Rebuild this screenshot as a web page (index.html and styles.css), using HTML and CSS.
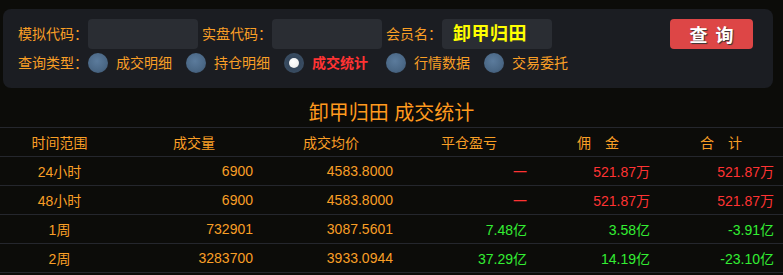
FILE: index.html
```html
<!DOCTYPE html>
<html lang="zh-CN">
<head>
    <meta charset="UTF-8">
    <title>成交统计</title>
    <link rel="stylesheet" href="styles.css">
</head>
<body>
    <div class="panel">
        <div class="row">
            <label class="label">模拟代码：</label>
            <input type="text" class="field">
            <label class="label">实盘代码：</label>
            <input type="text" class="field">
            <label class="label short">会员名：</label>
            <div class="field member">卸甲归田</div>
            <button class="btn-query">查 询</button>
        </div>
        <div class="row types">
            <span class="label">查询类型：</span>
            <label class="radio"><span class="dot"></span><span class="text">成交明细</span></label>
            <label class="radio"><span class="dot"></span><span class="text">持仓明细</span></label>
            <label class="radio active"><span class="dot"></span><span class="text">成交统计</span></label>
            <label class="radio"><span class="dot"></span><span class="text">行情数据</span></label>
            <label class="radio"><span class="dot"></span><span class="text">交易委托</span></label>
        </div>
    </div>

    <h2 class="title">卸甲归田 成交统计</h2>

    <table class="stats">
        <colgroup>
            <col style="width: 119px">
            <col style="width: 139px">
            <col style="width: 140px">
            <col style="width: 134px">
            <col style="width: 123px">
            <col style="width: 128px">
        </colgroup>
        <thead>
            <tr>
                <th class="range">时间范围</th>
                <th class="wide">成交量</th>
                <th>成交均价</th>
                <th class="narrow">平仓盈亏</th>
                <th>佣　金</th>
                <th>合　计</th>
            </tr>
        </thead>
        <tbody>
            <tr>
                <td class="range">24小时</td>
                <td>6900</td>
                <td>4583.8000</td>
                <td class="red">一</td>
                <td class="red">521.87万</td>
                <td class="red">521.87万</td>
            </tr>
            <tr>
                <td class="range">48小时</td>
                <td>6900</td>
                <td>4583.8000</td>
                <td class="red">一</td>
                <td class="red">521.87万</td>
                <td class="red">521.87万</td>
            </tr>
            <tr>
                <td class="range">1周</td>
                <td>732901</td>
                <td>3087.5601</td>
                <td class="green">7.48亿</td>
                <td class="green">3.58亿</td>
                <td class="green">-3.91亿</td>
            </tr>
            <tr>
                <td class="range">2周</td>
                <td>3283700</td>
                <td>3933.0944</td>
                <td class="green">37.29亿</td>
                <td class="green">14.19亿</td>
                <td class="green">-23.10亿</td>
            </tr>
        </tbody>
    </table>
</body>
</html>
```

FILE: styles.css
```css
body {
    margin: 0;
    background-color: #0c0c09;
    color: #f99f26;
    font-family: "Liberation Sans", "Noto Sans CJK SC", sans-serif;
    font-size: 14px;
}
.panel {
    margin: 9px 10px 0 3px;
    padding: 10px 20px 15px 15px;
    background-color: #1b1d22;
    border-radius: 8px;
}
.row {
    display: flex;
    align-items: center;
    height: 30px;
}
.row.types {
    height: 20px;
    margin-top: 4px;
}
.label {
    flex: none;
    width: 70px;
    line-height: 20px;
    color: #f99f26;
}
.label.short {
    width: 56px;
}
.field + .label {
    margin-left: 4px;
}
.field {
    flex: none;
    width: 110px;
    height: 30px;
    padding: 0;
    border: none;
    border-radius: 4px;
    background-color: #2a2d33;
    box-sizing: border-box;
    outline: none;
}
.member {
    padding-left: 11px;
    color: #ffff00;
    font-size: 18px;
    font-weight: bold;
    letter-spacing: 0.5px;
    line-height: 30px;
}
.btn-query {
    margin-left: auto;
    width: 83px;
    height: 30px;
    border: none;
    border-radius: 4px;
    background-color: #dd4646;
    color: #ffffff;
    font-family: "Noto Sans CJK SC", sans-serif;
    font-size: 18px;
    font-weight: bold;
    word-spacing: 4px;
    text-shadow: 1px 1px 1px #333;
    padding: 0;
}
.radio {
    display: flex;
    align-items: center;
    margin-right: 14px;
    line-height: 20px;
    cursor: pointer;
}
.radio .text {
    width: 56px;
    white-space: nowrap;
}
.radio .dot {
    flex: none;
    width: 20px;
    height: 20px;
    margin-right: 8px;
    border-radius: 50%;
    background: radial-gradient(circle at 45% 40%, #5b7b9c 0%, #4a6785 60%, #3a5068 100%);
    display: flex;
    align-items: center;
    justify-content: center;
}
.radio.active {
    color: #ff3333;
    font-weight: bold;
}
.radio.active .text {
    width: 60px;
}
.radio.active .dot {
    background: radial-gradient(circle, #2f3f52 0%, #3d5269 100%);
}
.radio.active .dot::after {
    content: "";
    width: 10px;
    height: 10px;
    border-radius: 50%;
    background: radial-gradient(circle at 40% 35%, #ffffff 0%, #f2f2f2 60%, #c8c8c8 100%);
}
.title {
    margin: 0;
    padding: 13px 0 2px;
    line-height: 24px;
    font-size: 20px;
    font-weight: normal;
    text-align: center;
    color: #ff9a1e;
}
.stats {
    width: 783px;
    border-collapse: collapse;
    table-layout: fixed;
}
.stats th, .stats td {
    height: 28px;
    padding: 0 5px 0 0;
    border-top: 1px solid #25272d;
    border-bottom: 1px solid #25272d;
    white-space: nowrap;
}
.stats th {
    padding-left: 45px;
    text-align: left;
    font-weight: normal;
    color: #f99f26;
}
.stats th.wide {
    padding-left: 54px;
}
.stats th.narrow {
    padding-left: 43px;
}
.stats td {
    text-align: right;
    color: #f99f26;
}
.stats td:last-child {
    padding-right: 9px;
}
.stats .range,
.stats th.range {
    padding: 0;
    text-align: center;
}
.stats td.red {
    color: #ff3333;
}
.stats td.green {
    color: #33ee33;
}
```
